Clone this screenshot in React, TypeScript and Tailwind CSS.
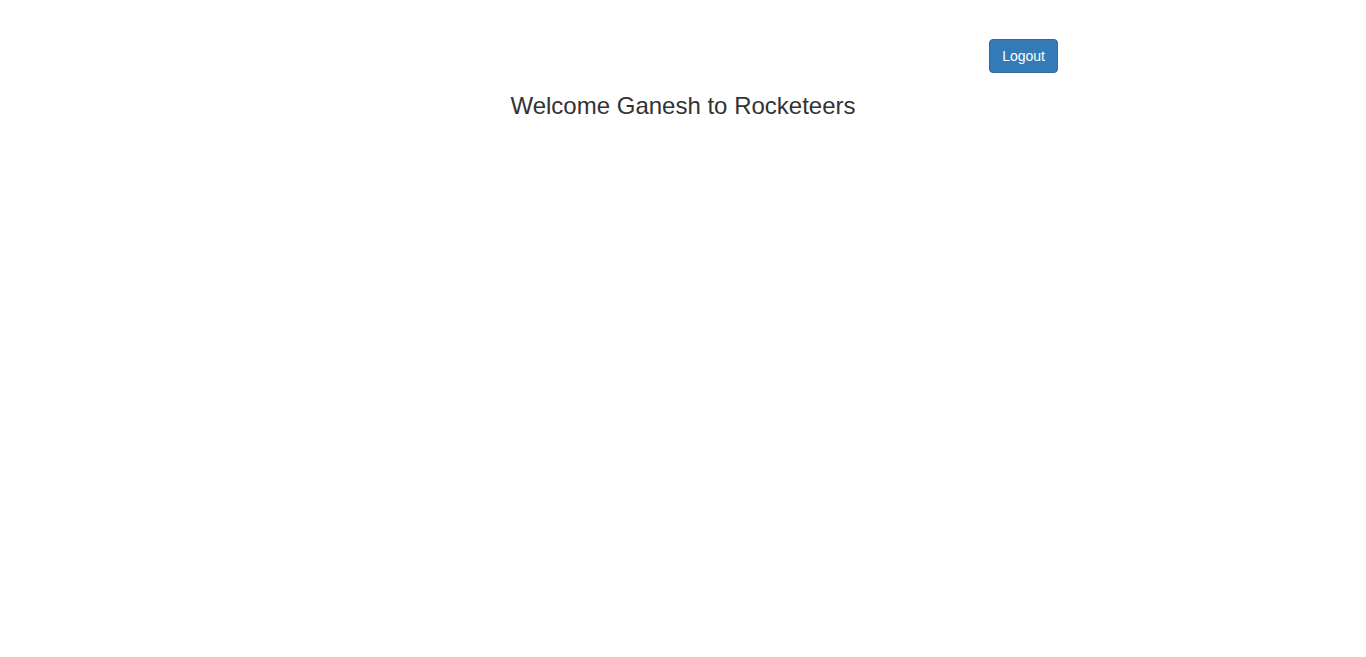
export default function App() {
  return (
    <div className="min-h-[657px] bg-white text-[#333] font-['Liberation_Sans',Arial,sans-serif] text-[14px] leading-[1.42857]">
      <div className="pt-[39px] flex justify-end w-[1058px]">
        <button className="h-[34px] px-[12px] rounded-[4px] bg-[#337ab7] border border-[#2e6da4] text-white text-[14px] leading-[20px]">
          Logout
        </button>
      </div>
      <h3 className="mt-[20px] text-center text-[24px] leading-[1.1] font-normal">
        Welcome Ganesh to Rocketeers
      </h3>
    </div>
  );
}
